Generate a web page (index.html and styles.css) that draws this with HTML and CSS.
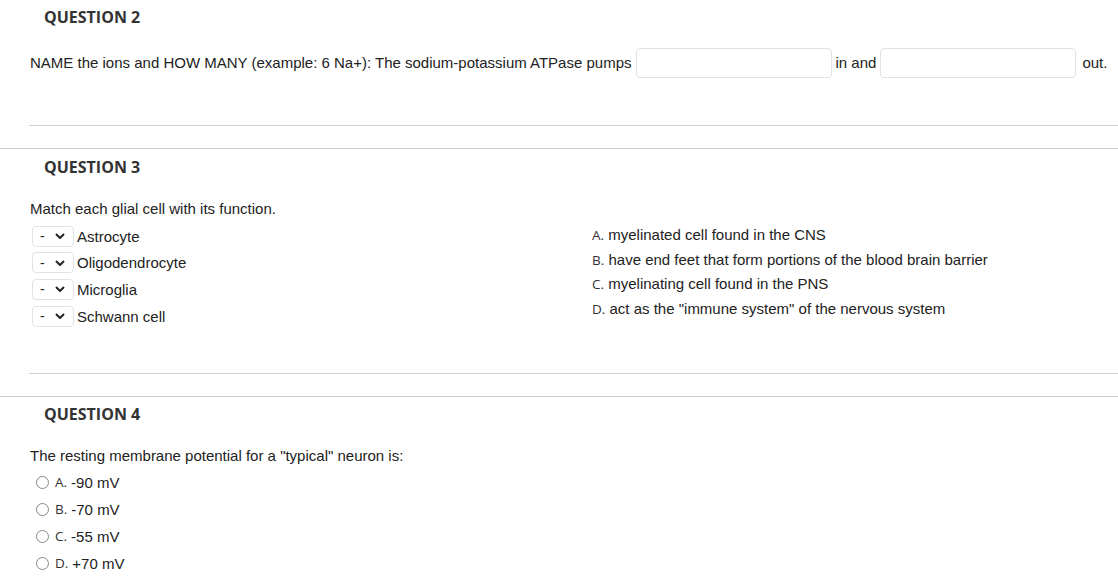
FILE: index.html
```html
<!DOCTYPE html>
<html>
<head>
<meta charset="utf-8">
<link rel="stylesheet" href="styles.css">
</head>
<body>
<section class="question q2">
  <h2 class="q-head">QUESTION 2</h2>
  <div class="q-body">
    <div class="fill-line">
      <span>NAME the ions and HOW MANY (example: 6 Na+): The sodium-potassium ATPase pumps</span>
      <span class="blank"></span>
      <span>in and</span>
      <span class="blank"></span>
      <span class="out">out.</span>
    </div>
  </div>
  <div class="inner-rule"></div>
</section>

<section class="question q3">
  <h2 class="q-head">QUESTION 3</h2>
  <div class="q-body">
    <p class="prompt">Match each glial cell with its function.</p>
    <div class="match">
      <div class="match-left">
        <div class="match-row"><span class="sel"><span class="dash">-</span><svg class="chev" viewBox="0 0 10 6" width="10" height="6"><path d="M1 1 L5 5 L9 1" fill="none" stroke="#222" stroke-width="2"/></svg></span><span>Astrocyte</span></div>
        <div class="match-row"><span class="sel"><span class="dash">-</span><svg class="chev" viewBox="0 0 10 6" width="10" height="6"><path d="M1 1 L5 5 L9 1" fill="none" stroke="#222" stroke-width="2"/></svg></span><span>Oligodendrocyte</span></div>
        <div class="match-row"><span class="sel"><span class="dash">-</span><svg class="chev" viewBox="0 0 10 6" width="10" height="6"><path d="M1 1 L5 5 L9 1" fill="none" stroke="#222" stroke-width="2"/></svg></span><span>Microglia</span></div>
        <div class="match-row"><span class="sel"><span class="dash">-</span><svg class="chev" viewBox="0 0 10 6" width="10" height="6"><path d="M1 1 L5 5 L9 1" fill="none" stroke="#222" stroke-width="2"/></svg></span><span>Schwann cell</span></div>
      </div>
      <div class="match-right">
        <div class="ans"><span class="letter">A.</span> myelinated cell found in the CNS</div>
        <div class="ans"><span class="letter">B.</span> have end feet that form portions of the blood brain barrier</div>
        <div class="ans"><span class="letter">C.</span> myelinating cell found in the PNS</div>
        <div class="ans"><span class="letter">D.</span> act as the "immune system" of the nervous system</div>
      </div>
    </div>
  </div>
  <div class="inner-rule"></div>
</section>

<section class="question q4">
  <h2 class="q-head">QUESTION 4</h2>
  <div class="q-body">
    <p class="prompt">The resting membrane potential for a "typical" neuron is:</p>
    <div class="options">
      <div class="opt"><span class="radio"></span><span class="letter">A.</span> -90 mV</div>
      <div class="opt"><span class="radio"></span><span class="letter">B.</span> -70 mV</div>
      <div class="opt"><span class="radio"></span><span class="letter">C.</span> -55 mV</div>
      <div class="opt"><span class="radio"></span><span class="letter">D.</span> +70 mV</div>
    </div>
  </div>
</section>
</body>
</html>
```

FILE: styles.css
```css
* { box-sizing: border-box; }
html, body { margin: 0; padding: 0; background: #fff; }
body {
  font-family: "Liberation Sans", Arial, sans-serif;
  font-size: 15px;
  color: #222;
  overflow: hidden;
}
.question { border-top: 1px solid #cfcfcf; }
.q2 { border-top: none; }
.q-head {
  margin: 0;
  padding: 7px 0 0 44px;
  height: 29px;
  line-height: 22px;
  font-family: "Open Sans", sans-serif;
  font-weight: 700;
  font-size: 16px;
  color: #333;
}
.q2 .q-head { padding-top: 6px; height: 28px; }
.q4 .q-head { padding-top: 6px; height: 28px; }
.q-body { padding-left: 30px; }
.inner-rule {
  margin-left: 29px;
  border-top: 1px solid #cfcfcf;
  height: 23px;
}
.fill-line {
  display: flex;
  align-items: flex-start;
  gap: 4px;
  padding-top: 20px;
  height: 97px;
}
.fill-line span { line-height: 30px; }
.fill-line .out { margin-left: 2px; }
.blank {
  display: inline-block;
  width: 196px;
  height: 30px;
  border: 1px solid #e2e2e2;
  border-radius: 4px;
  background: #fff;
}
.prompt { margin: 0; line-height: 20px; }
.q3 .prompt { padding-top: 21px; height: 45px; }
.q4 .prompt { padding-top: 21px; height: 42px; }
.match { display: flex; height: 148px; margin-top: 2px; }
.match-left { width: 562px; display: flex; flex-direction: column; gap: 4.7px; padding-left: 2px; }
.match-row { display: flex; align-items: center; gap: 3px; height: 22px; }
.sel {
  display: inline-flex;
  align-items: center;
  justify-content: space-between;
  width: 42px;
  height: 21px;
  padding: 0 8px 0 7px;
  border: 1px solid #e2e2e2;
  border-radius: 4px;
  background: #fff;
}
.dash { font-size: 14px; line-height: 1; }
.chev { display: block; }
.match-right { display: flex; flex-direction: column; gap: 5px; margin-top: 0; }
.ans { line-height: 19.7px; height: 19.7px; }
.letter { font-family: "Open Sans", sans-serif; font-size: 13.5px; color: #333; }
.options { display: flex; flex-direction: column; gap: 5px; padding-top: 4px; }
.opt { display: flex; align-items: center; height: 22px; padding-left: 6px; }
.radio {
  width: 13px;
  height: 13px;
  border: 1px solid #888;
  border-radius: 50%;
  margin-right: 6px;
}
.opt .letter { margin-right: 4px; }
```
